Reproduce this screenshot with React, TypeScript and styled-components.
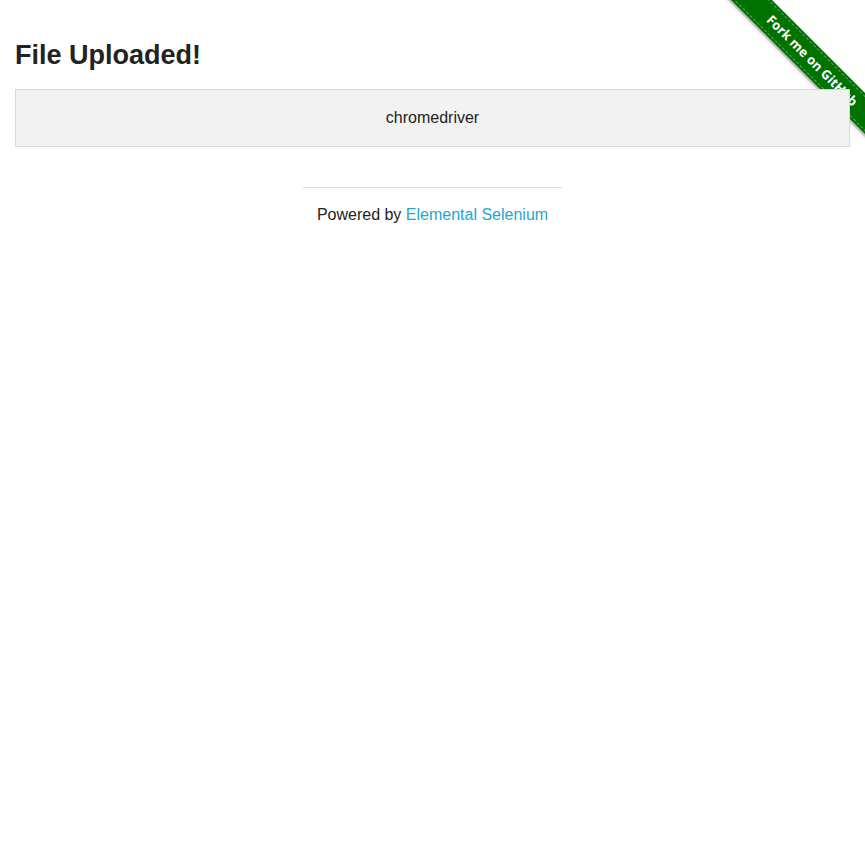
import React from 'react';
import styled, { createGlobalStyle } from 'styled-components';

const GlobalStyle = createGlobalStyle`
  html, body {
    margin: 0;
    padding: 0;
    background: #fff;
  }
  body {
    font-family: 'Liberation Sans', Arial, Helvetica, sans-serif;
    color: #222;
    font-size: 16px;
  }
`;

const Page = styled.div`
  position: relative;
  padding: 0 15px;
`;

const Title = styled.h3`
  margin: 39px 0 18px;
  font-size: 27px;
  line-height: 32px;
  font-weight: bold;
  color: #222;
`;

const Panel = styled.div`
  position: relative;
  z-index: 1;
  padding: 20px;
  border: 1px solid #d8d8d8;
  background: #f2f2f2;
  text-align: center;
  font-size: 16px;
  line-height: 16px;
`;

const Footer = styled.div`
  width: 259px;
  margin: 40px auto 0;
  border-top: 1px solid #ddd;
  padding-top: 15px;
  text-align: center;
  font-size: 16px;
  line-height: 24px;
`;

const Link = styled.a`
  color: #1ea7d0;
  text-decoration: none;
`;

// ribbon corner, clipped to its square
const RibbonCorner = styled.div`
  position: absolute;
  top: 0;
  right: 0;
  width: 149px;
  height: 149px;
  overflow: hidden;
  z-index: 0;
`;

const Ribbon = styled.a`
  position: absolute;
  left: -14px;
  top: 56px;
  width: 240px;
  height: 29px;
  box-sizing: border-box;
  padding-left: 45px;
  background: #007200;
  color: #fff;
  font-family: 'Open Sans', 'DejaVu Sans', sans-serif;
  font-weight: bold;
  font-size: 13px;
  line-height: 28px;
  white-space: nowrap;
  text-decoration: none;
  transform: rotate(45deg);
  box-shadow: 0 2px 3px rgba(0, 0, 0, 0.35);

  &::before {
    content: '';
    position: absolute;
    left: 0;
    right: 0;
    top: 2px;
    bottom: 2px;
    border-top: 1px dashed rgba(255, 255, 255, 0.35);
    border-bottom: 1px dashed rgba(255, 255, 255, 0.35);
  }
`;

const App: React.FC = () => {
  return (
    <>
      <GlobalStyle />
      <RibbonCorner>
        <Ribbon href="#">Fork me on GitHub</Ribbon>
      </RibbonCorner>
      <Page>
        <Title>File Uploaded!</Title>
        <Panel>chromedriver</Panel>
        <Footer>
          Powered by <Link href="#">Elemental Selenium</Link>
        </Footer>
      </Page>
    </>
  );
};

export default App;
